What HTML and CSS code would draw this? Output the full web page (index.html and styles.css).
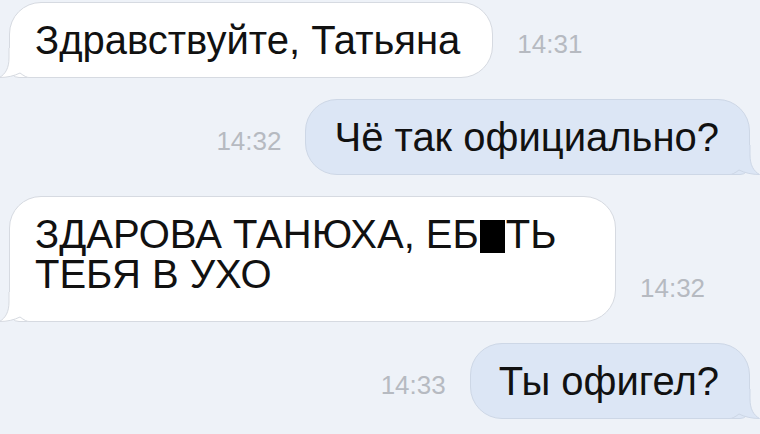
FILE: index.html
```html
<!DOCTYPE html>
<html lang="ru">
<head>
    <meta charset="UTF-8">
    <meta name="viewport" content="width=device-width, initial-scale=1.0">
    <title>Сообщения</title>
    <link rel="stylesheet" href="styles.css">
</head>
<body>
    <div class="chat">
        <div class="row in">
            <div class="bubble">
                Здравствуйте, Татьяна
                <svg class="tail" width="30" height="30" viewBox="0 0 30 30"><path class="tail-fill" d="M10 0 L10 10 C10 20 6.5 26 0.5 29.5 C8 29.5 15 28 21 25 C25 28 28 29.5 30 29.5 L30 0 Z"/><path class="tail-line" d="M10 0 L10 10 C10 20 6.5 26 0.5 29.5 C8 29.5 15 28 21 25 C25 28 28 29.5 30 29.5"/></svg>
            </div>
            <span class="time">14:31</span>
        </div>

        <div class="row out">
            <span class="time">14:32</span>
            <div class="bubble">
                Чё так официально?
                <svg class="tail" width="30" height="30" viewBox="0 0 30 30"><path class="tail-fill" d="M10 0 L10 10 C10 20 6.5 26 0.5 29.5 C8 29.5 15 28 21 25 C25 28 28 29.5 30 29.5 L30 0 Z"/><path class="tail-line" d="M10 0 L10 10 C10 20 6.5 26 0.5 29.5 C8 29.5 15 28 21 25 C25 28 28 29.5 30 29.5"/></svg>
            </div>
        </div>

        <div class="row in">
            <div class="bubble wide">
                ЗДАРОВА ТАНЮХА, ЕБ<span class="censor"></span>ТЬ<br>ТЕБЯ В УХО
                <svg class="tail" width="30" height="30" viewBox="0 0 30 30"><path class="tail-fill" d="M10 0 L10 10 C10 20 6.5 26 0.5 29.5 C8 29.5 15 28 21 25 C25 28 28 29.5 30 29.5 L30 0 Z"/><path class="tail-line" d="M10 0 L10 10 C10 20 6.5 26 0.5 29.5 C8 29.5 15 28 21 25 C25 28 28 29.5 30 29.5"/></svg>
            </div>
            <span class="time">14:32</span>
        </div>

        <div class="row out">
            <span class="time">14:33</span>
            <div class="bubble">
                Ты офигел?
                <svg class="tail" width="30" height="30" viewBox="0 0 30 30"><path class="tail-fill" d="M10 0 L10 10 C10 20 6.5 26 0.5 29.5 C8 29.5 15 28 21 25 C25 28 28 29.5 30 29.5 L30 0 Z"/><path class="tail-line" d="M10 0 L10 10 C10 20 6.5 26 0.5 29.5 C8 29.5 15 28 21 25 C25 28 28 29.5 30 29.5"/></svg>
            </div>
        </div>
    </div>
</body>
</html>
```

FILE: styles.css
```css
body {
    margin: 0;
    background: #eef2f8;
    font-family: 'Liberation Sans', Arial, sans-serif;
    color: #111;
    overflow: hidden;
}
.chat {
    display: flex;
    flex-direction: column;
    gap: 21px;
    padding: 2px 10px 0 9px;
}
.row {
    display: flex;
    align-items: flex-end;
    gap: 24px;
}
.row.out {
    justify-content: flex-end;
}
.bubble {
    position: relative;
    box-sizing: border-box;
    font-size: 40px;
    line-height: 40px;
    padding: 17px 32px 17px 25px;
    border-radius: 32px;
    border: 1px solid #d6dae1;
    background: #fff;
}
.row.in .bubble {
    border-bottom-left-radius: 10px;
}
.row.out .bubble {
    background: #dce6f5;
    border-color: #cdd7e6;
    padding: 17px 30px 17px 28px;
    border-bottom-right-radius: 10px;
}
.bubble.wide {
    width: 607px;
    padding-bottom: 27px;
}
.tail {
    position: absolute;
    bottom: -1px;
    left: -11px;
}
.row.out .tail {
    left: auto;
    right: -11px;
    transform: scaleX(-1);
}
.tail-fill {
    fill: #fff;
}
.tail-line {
    fill: none;
    stroke: #d6dae1;
    stroke-width: 1;
}
.row.out .tail-fill {
    fill: #dce6f5;
}
.row.out .tail-line {
    stroke: #cdd7e6;
}
.time {
    font-size: 26px;
    line-height: 30px;
    margin-bottom: 19px;
    color: #b6bac1;
    white-space: nowrap;
}
.censor {
    display: inline-block;
    width: 25px;
    height: 33px;
    background: #000;
    vertical-align: -5px;
    margin: 0 1px;
}
```
